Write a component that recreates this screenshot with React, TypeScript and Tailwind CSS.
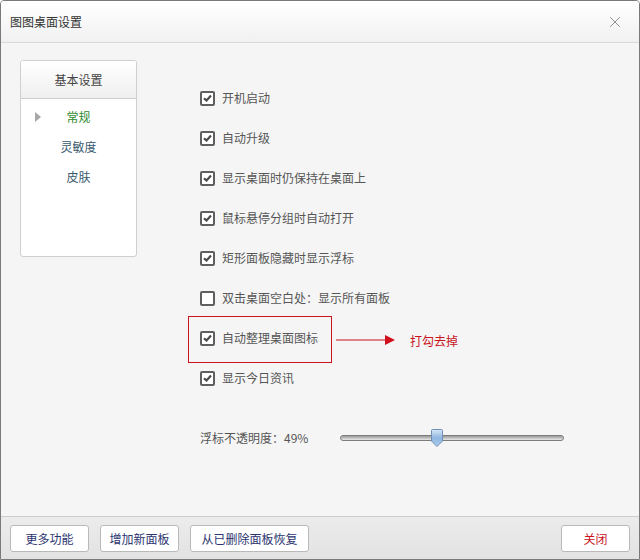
import { X } from "lucide-react";

const font = "font-['Noto_Sans_CJK_SC','Noto_Sans',sans-serif]";

type Opt = { label: string; checked: boolean; mark?: boolean };

const options: Opt[] = [
  { label: "开机启动", checked: true },
  { label: "自动升级", checked: true },
  { label: "显示桌面时仍保持在桌面上", checked: true },
  { label: "鼠标悬停分组时自动打开", checked: true },
  { label: "矩形面板隐藏时显示浮标", checked: true },
  { label: "双击桌面空白处：显示所有面板", checked: false },
  { label: "自动整理桌面图标", checked: true, mark: true },
  { label: "显示今日资讯", checked: true },
];

function CheckBox({ checked }: { checked: boolean }) {
  return (
    <span className="grid size-[15px] flex-none place-items-center rounded-[2px] border-2 border-[#5f5f5f] bg-white">
      {checked && (
        <svg width="9" height="8" viewBox="0 0 9 8">
          <path d="M1 4.2 L3.5 6.5 L8 1.5" fill="none" stroke="#4a4a4a" strokeWidth="2.2" />
        </svg>
      )}
    </span>
  );
}

function OptionRow({ opt }: { opt: Opt }) {
  return (
    <div className="relative flex h-10 items-center gap-[7px]">
      <CheckBox checked={opt.checked} />
      <span className="text-[12px] text-[#555]">{opt.label}</span>
      {opt.mark && (
        <>
          <span className="absolute left-[-12px] top-[-2px] h-[47px] w-[144px] border border-[#c8141e]" />
          <svg className="absolute left-[136px] top-[16px]" width="60" height="12" viewBox="0 0 60 12">
            <line x1="0" y1="6" x2="50" y2="6" stroke="#c8141e" strokeWidth="1.2" />
            <polygon points="49,1 59,6 49,11" fill="#d0101a" />
          </svg>
          <span className="absolute left-[210px] top-[14px] text-[12px] text-[#c8141e]">打勾去掉</span>
        </>
      )}
    </div>
  );
}

function Slider() {
  return (
    <div className="relative h-[20px] w-[224px] flex-none">
      <div className="absolute left-0 right-0 top-[7px] h-[6px] rounded-full border border-[#7d7d7d] bg-gradient-to-b from-[#9a9a9a] to-[#e8e8e8]" />
      <svg className="absolute left-[91px] top-[1px]" width="12" height="18" viewBox="0 0 12 18">
        <defs>
          <linearGradient id="th" x1="0" y1="0" x2="0" y2="1">
            <stop offset="0" stopColor="#d8e8f8" />
            <stop offset="0.5" stopColor="#8fb6e0" />
            <stop offset="1" stopColor="#aecdef" />
          </linearGradient>
        </defs>
        <path d="M1.5 0.5 H10.5 Q11.5 0.5 11.5 1.5 V12 L6 17.5 L0.5 12 V1.5 Q0.5 0.5 1.5 0.5 Z" fill="url(#th)" stroke="#6f8fb4" />
      </svg>
    </div>
  );
}

function FootButton({ children, red, w }: { children: string; red?: boolean; w: string }) {
  return (
    <button
      type="button"
      className={`h-[27px] ${w} rounded-[3px] border border-[#b9b9b9] bg-white text-[12px] ${red ? "text-[#c8141e]" : "text-[#2c3570]"}`}
    >
      {children}
    </button>
  );
}

export default function App() {
  return (
    <div className={`flex h-[560px] w-[640px] flex-col overflow-hidden rounded-t-[4px] border border-[#7a7a7a] bg-[#f5f5f5] ${font}`}>
      <div className="flex h-[42px] flex-none items-center justify-between border-b border-[#d9d9d9] bg-gradient-to-b from-white to-[#f1f1f1] pl-[9px] pr-[15px]">
        <span className="text-[12px] text-[#333]">图图桌面设置</span>
        <X size={18} strokeWidth={1.1} className="text-[#7a7a7a]" />
      </div>

      <div className="flex flex-1 items-start">
        <div className="ml-[19px] mt-[17px] h-[197px] w-[117px] flex-none overflow-hidden rounded-[3px] border border-[#cfcfcf] bg-white">
          <div className="flex h-[38px] items-center justify-center border-b border-[#cfcfcf] bg-gradient-to-b from-white to-[#efefef] text-[12px] text-[#444]">
            基本设置
          </div>
          <div className="relative mt-[3px] flex h-[30px] items-center justify-center text-[12px] text-[#2f8a2f]">
            <span className="absolute left-[14px] top-[10px] h-0 w-0 border-y-[5px] border-l-[6px] border-y-transparent border-l-[#a8a8a8]" />
            常规
          </div>
          <div className="flex h-[30px] items-center justify-center text-[12px] text-[#3a5a6e]">灵敏度</div>
          <div className="flex h-[30px] items-center justify-center text-[12px] text-[#3a5a6e]">皮肤</div>
        </div>

        <div className="ml-[63px] flex flex-col pt-[35px]">
          {options.map((o) => (
            <OptionRow key={o.label} opt={o} />
          ))}
          <div className="mt-5 flex h-10 items-center">
            <span className="w-[140px] flex-none whitespace-nowrap text-[12px] text-[#555]">浮标不透明度：49%</span>
            <Slider />
          </div>
        </div>
      </div>

      <div className="flex h-[43px] flex-none items-start gap-[11px] border-t border-[#cdcdcd] bg-gradient-to-b from-[#ececec] to-[#e2e2e2] px-[9px] pt-[8px]">
        <FootButton w="w-[79px]">更多功能</FootButton>
        <FootButton w="w-[79px]">增加新面板</FootButton>
        <FootButton w="w-[119px]">从已删除面板恢复</FootButton>
        <div className="flex-1" />
        <FootButton w="w-[69px]" red>
          关闭
        </FootButton>
      </div>
    </div>
  );
}
